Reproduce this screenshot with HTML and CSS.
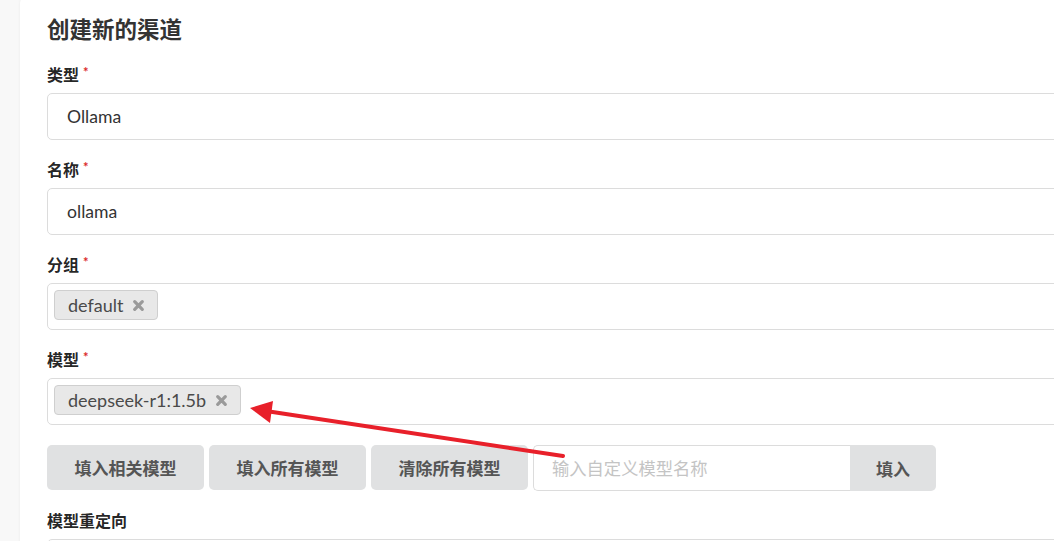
FILE: index.html
```html
<!DOCTYPE html>
<html lang="zh-CN">
<head>
  <meta charset="UTF-8"/>
  <meta name="viewport" content="width=device-width,initial-scale=1.0"/>
  <title>创建新的渠道</title>
  <link rel="stylesheet" href="styles.css">
</head>
<body>
  <div class="page">
    <div class="card">
      <h2 class="title">创建新的渠道</h2>

      <div class="field required">
        <label>类型</label>
        <div class="input">Ollama</div>
      </div>

      <div class="field required">
        <label>名称</label>
        <div class="input text">ollama</div>
      </div>

      <div class="field required">
        <label>分组</label>
        <div class="input multi">
          <span class="chip">default
            <svg class="del" viewBox="0 0 12 12"><path d="M2.5 2.5l7 7M9.5 2.5l-7 7"/></svg>
          </span>
        </div>
      </div>

      <div class="field required">
        <label>模型</label>
        <div class="input multi">
          <span class="chip">deepseek-r1:1.5b
            <svg class="del" viewBox="0 0 12 12"><path d="M2.5 2.5l7 7M9.5 2.5l-7 7"/></svg>
          </span>
        </div>
      </div>

      <div class="actions">
        <button class="btn">填入相关模型</button>
        <button class="btn">填入所有模型</button>
        <button class="btn">清除所有模型</button>
        <div class="action-input">
          <input type="text" placeholder="输入自定义模型名称"/>
          <button class="btn attached">填入</button>
        </div>
      </div>

      <div class="field">
        <label>模型重定向</label>
        <div class="input"></div>
      </div>
    </div>
  </div>

  <!-- annotation arrow drawn over the form -->
  <svg class="annot" width="1054" height="541" viewBox="0 0 1054 541">
    <line x1="563" y1="456" x2="266" y2="411" stroke="#e8202a" stroke-width="4" stroke-linecap="round"/>
    <polygon points="250,408 273,401 270,423" fill="#e8202a"/>
  </svg>
</body>
</html>
```

FILE: styles.css
```css
* { box-sizing:border-box; margin:0; padding:0; }
html, body { overflow:hidden; }
body {
  background:#f8f8f8; color:#333;
  font-family: Lato, "Noto Sans CJK SC", sans-serif;
  width:1054px; height:541px;
}
.page { padding-left:20px; }
.card {
  width:1100px; min-height:600px;
  margin-top:-8px;
  background:#fff;
  border-radius:12px;
  box-shadow:0 0 3px rgba(0,0,0,.06);
  padding:24px 0 0 27px;
}
.title {
  font-size:22.5px; line-height:28px; font-weight:700;
  color:#333; margin-bottom:21px;
}
.field { margin-bottom:20px; }
.field label {
  display:block; font-size:16px; line-height:20px;
  font-weight:700; color:rgba(0,0,0,.87);
  margin-bottom:8px;
}
.field.required label:after {
  content:'*'; color:#db2828;
  font-size:13px; vertical-align:top;
  margin-left:4px; position:relative; top:-3px;
}
.input {
  height:47px; width:1040px;
  border:1px solid #dcdcdc; border-radius:5px;
  background:#fff;
  font-size:17.6px; color:#333;
  display:flex; align-items:center;
  padding:0 19px;
}
.input.multi { padding:0 6px; align-items:flex-start; padding-top:6px; }
.chip {
  display:inline-flex; align-items:center; gap:9px;
  height:30px; padding:0 12px 0 13px;
  background:#e8e8e8; border:1px solid #cfcfcf; border-radius:4px;
  font-size:18px; font-weight:400; color:#4a4a4a;
}
.chip .del { width:13px; height:13px; }
.chip .del path { stroke:#9a9a9a; stroke-width:3; stroke-linecap:round; fill:none; }
.actions {
  display:flex; gap:5px; margin-bottom:20px;
}
.btn {
  height:45px; padding:0 27.5px;
  background:#e0e1e2; color:#555;
  border:none; border-radius:5px;
  font-family:inherit; font-size:17px; font-weight:700;
}
.action-input { display:flex; }
.action-input input {
  width:317px; height:46px;
  border:1px solid #dcdcdc; border-right:none;
  border-radius:5px 0 0 5px;
  padding:0 18px;
  font-family:inherit; font-size:17.3px; color:#333;
}
.action-input input::placeholder { color:#c4c4c4; }
.btn.attached { border-radius:0 5px 5px 0; height:46px; padding:0 26px; }
.annot { position:absolute; left:0; top:0; pointer-events:none; }
```
